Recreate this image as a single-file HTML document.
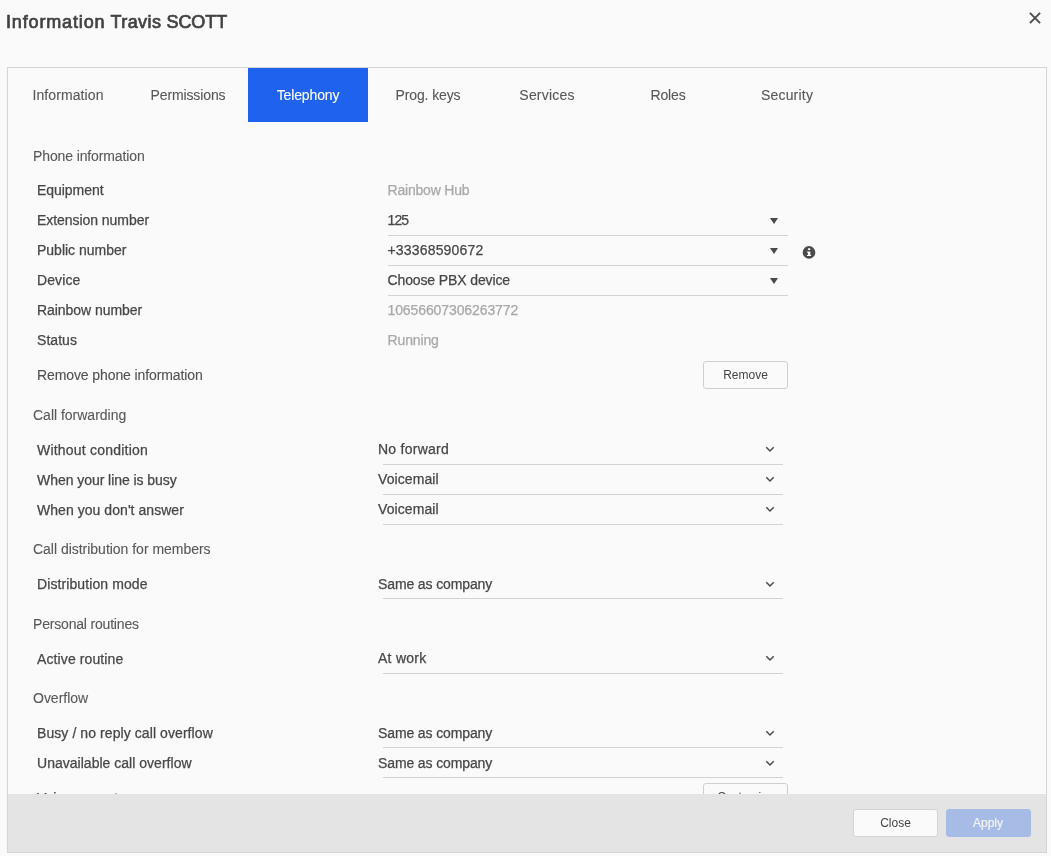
<!DOCTYPE html>
<html><head><meta charset="utf-8">
<style>
html,body{margin:0;padding:0;}
body{width:1051px;height:856px;overflow:hidden;background:#fafafa;position:relative;font-family:"Liberation Sans",sans-serif;}
.a{position:absolute;white-space:nowrap;}
.t{position:absolute;white-space:nowrap;font-size:14px;line-height:16px;}
.title{position:absolute;left:6px;top:12px;font-size:18px;line-height:20px;color:#424242;-webkit-text-stroke:0.7px #424242;white-space:nowrap;}
.panel{position:absolute;left:7px;top:67px;width:1038px;height:784px;border:1px solid #d5d5d5;background:#fafafa;}
.tab{position:absolute;top:87px;width:120px;text-align:center;font-size:14px;line-height:16px;color:#575757;-webkit-text-stroke:0.1px currentColor;letter-spacing:-0.12px;}
.tabsel{position:absolute;left:248px;top:68px;width:120px;height:54px;background:#1f62ee;}
.h{color:#585858;letter-spacing:-0.12px;left:33px;-webkit-text-stroke:0.1px #585858;}
.l{color:#474747;letter-spacing:-0.05px;left:37px;-webkit-text-stroke:0.25px #474747;}
.lr{color:#505050;letter-spacing:-0.15px;left:37px;-webkit-text-stroke:0.1px #505050;}
.v{color:#474747;letter-spacing:-0.05px;-webkit-text-stroke:0.25px #474747;}
.g{color:#a8a8a8;letter-spacing:-0.05px;-webkit-text-stroke:0.25px #a8a8a8;}
.ln{position:absolute;height:1px;background:#d3d3d3;width:400px;}
.tri{position:absolute;width:0;height:0;border-left:4px solid transparent;border-right:4px solid transparent;border-top:6px solid #4a4a4a;}
.chev{position:absolute;width:9px;height:6px;}
.btn{position:absolute;box-sizing:border-box;width:85px;height:28px;border:1px solid #cfcfcf;border-radius:3px;background:#fafafa;font-size:12px;line-height:26px;text-align:center;color:#444;}
.footer{position:absolute;left:8px;top:794px;width:1038px;height:58px;background:#e4e4e4;}
</style></head><body>
<div id="w" style="position:absolute;left:0;top:0;width:1051px;height:856px;will-change:transform">
<div class="title"><span style="letter-spacing:0.85px">Information</span> <span style="letter-spacing:0.45px">Travis</span> <span style="letter-spacing:-0.05px">SCOTT</span></div>
<svg class="a" style="left:1028px;top:11px" width="14" height="14" viewBox="0 0 14 14"><path d="M1.9 1.9L12.1 12.1M12.1 1.9L1.9 12.1" stroke="#4a4a4a" stroke-width="1.9" fill="none"/></svg>

<div class="panel"></div>
<div class="tabsel"></div>
<div class="tab" style="left:8px;letter-spacing:0.1px">Information</div>
<div class="tab" style="left:128px">Permissions</div>
<div class="tab" style="left:248px;color:#fff">Telephony</div>
<div class="tab" style="left:368px">Prog. keys</div>
<div class="tab" style="left:487px;letter-spacing:0.2px">Services</div>
<div class="tab" style="left:608px">Roles</div>
<div class="tab" style="left:727px;letter-spacing:0.2px">Security</div>

<div class="t h" style="top:148px">Phone information</div>
<div class="t l" style="top:182px">Equipment</div>
<div class="t l" style="top:212px">Extension number</div>
<div class="t l" style="top:242px;letter-spacing:-0.010px">Public number</div>
<div class="t l" style="top:272px;letter-spacing:0.100px">Device</div>
<div class="t l" style="top:302px">Rainbow number</div>
<div class="t l" style="top:332px;letter-spacing:0.050px">Status</div>
<div class="t lr" style="top:367px;letter-spacing:-0.100px">Remove phone information</div>

<div class="t g" style="left:387.5px;top:182px;letter-spacing:-0.200px">Rainbow Hub</div>
<div class="t v" style="left:387.5px;top:212px;letter-spacing:-0.900px">125</div>
<div class="t v" style="left:387.5px;top:242px;letter-spacing:0.17px">+33368590672</div>
<div class="t v" style="left:387.5px;top:272px;letter-spacing:-0.12px">Choose PBX device</div>
<div class="t g" style="left:387.5px;top:302px;letter-spacing:-0.1px">10656607306263772</div>
<div class="t g" style="left:387.5px;top:332px;letter-spacing:-0.130px">Running</div>
<div class="ln" style="left:388px;top:235px"></div>
<div class="ln" style="left:388px;top:265px"></div>
<div class="ln" style="left:388px;top:295px"></div>
<div class="tri" style="left:770px;top:218px"></div>
<div class="tri" style="left:770px;top:248px"></div>
<div class="tri" style="left:770px;top:278px"></div>
<svg class="a" style="left:802px;top:246px" width="14" height="14" viewBox="0 0 14 14"><circle cx="7" cy="6.4" r="6.3" fill="#4a4a4a"/><rect x="5.9" y="2.3" width="2.4" height="1.6" rx="0.5" fill="#fff"/><path d="M4.9 5.5H8.35V8.9H9.1V10.1H4.9V8.9H5.9V6.55H4.9Z" fill="#fff"/></svg>
<div class="btn" style="left:703px;top:361px">Remove</div>

<div class="t h" style="top:407px;letter-spacing:-0.010px">Call forwarding</div>
<div class="t l" style="top:442px;letter-spacing:0.210px">Without condition</div>
<div class="t l" style="top:472px">When your line is busy</div>
<div class="t l" style="top:502px;letter-spacing:0.050px">When you don't answer</div>
<div class="t v" style="left:378px;top:441px;letter-spacing:0.260px">No forward</div>
<div class="t v" style="left:378px;top:471px;letter-spacing:0.090px">Voicemail</div>
<div class="t v" style="left:378px;top:501px;letter-spacing:0.090px">Voicemail</div>
<div class="ln" style="left:383px;top:464px"></div>
<div class="ln" style="left:383px;top:494px"></div>
<div class="ln" style="left:383px;top:524px"></div>

<div class="t h" style="top:541px;letter-spacing:-0.020px">Call distribution for members</div>
<div class="t l" style="top:576px;letter-spacing:0.100px">Distribution mode</div>
<div class="t v" style="left:378px;top:576px;letter-spacing:-0.120px">Same as company</div>
<div class="ln" style="left:383px;top:598px"></div>

<div class="t h" style="top:616px;letter-spacing:-0.185px">Personal routines</div>
<div class="t l" style="top:651px;letter-spacing:0.110px">Active routine</div>
<div class="t v" style="left:378px;top:650px;letter-spacing:0.260px">At work</div>
<div class="ln" style="left:383px;top:673px"></div>

<div class="t h" style="top:690px;letter-spacing:-0.010px">Overflow</div>
<div class="t l" style="top:725px;letter-spacing:0.080px">Busy / no reply call overflow</div>
<div class="t l" style="top:755px;letter-spacing:0.020px">Unavailable call overflow</div>
<div class="t l" style="top:790px">Voice prompt</div>
<div class="t v" style="left:378px;top:725px;letter-spacing:-0.120px">Same as company</div>
<div class="t v" style="left:378px;top:755px;letter-spacing:-0.120px">Same as company</div>
<div class="ln" style="left:383px;top:747px"></div>
<div class="ln" style="left:383px;top:777px"></div>
<div class="btn" style="left:703px;top:783px">Customize</div>

<svg class="a" style="left:765px;top:446px" width="10" height="7" viewBox="0 0 10 7"><path d="M1.3 1.3L5 5L8.7 1.3" stroke="#4a4a4a" stroke-width="1.5" fill="none"/></svg>
<svg class="a" style="left:765px;top:476px" width="10" height="7" viewBox="0 0 10 7"><path d="M1.3 1.3L5 5L8.7 1.3" stroke="#4a4a4a" stroke-width="1.5" fill="none"/></svg>
<svg class="a" style="left:765px;top:506px" width="10" height="7" viewBox="0 0 10 7"><path d="M1.3 1.3L5 5L8.7 1.3" stroke="#4a4a4a" stroke-width="1.5" fill="none"/></svg>
<svg class="a" style="left:765px;top:581px" width="10" height="7" viewBox="0 0 10 7"><path d="M1.3 1.3L5 5L8.7 1.3" stroke="#4a4a4a" stroke-width="1.5" fill="none"/></svg>
<svg class="a" style="left:765px;top:655px" width="10" height="7" viewBox="0 0 10 7"><path d="M1.3 1.3L5 5L8.7 1.3" stroke="#4a4a4a" stroke-width="1.5" fill="none"/></svg>
<svg class="a" style="left:765px;top:730px" width="10" height="7" viewBox="0 0 10 7"><path d="M1.3 1.3L5 5L8.7 1.3" stroke="#4a4a4a" stroke-width="1.5" fill="none"/></svg>
<svg class="a" style="left:765px;top:760px" width="10" height="7" viewBox="0 0 10 7"><path d="M1.3 1.3L5 5L8.7 1.3" stroke="#4a4a4a" stroke-width="1.5" fill="none"/></svg>

<div class="footer"></div>
<div class="btn" style="left:853px;top:809px;border-color:#d3d3d3">Close</div>
<div class="btn" style="left:946px;top:809px;background:#a7bbe7;border-color:#a7bbe7;color:#f3f3f3;-webkit-text-stroke:0.2px #f3f3f3;text-indent:-1px">Apply</div>
</div>
</body></html>
